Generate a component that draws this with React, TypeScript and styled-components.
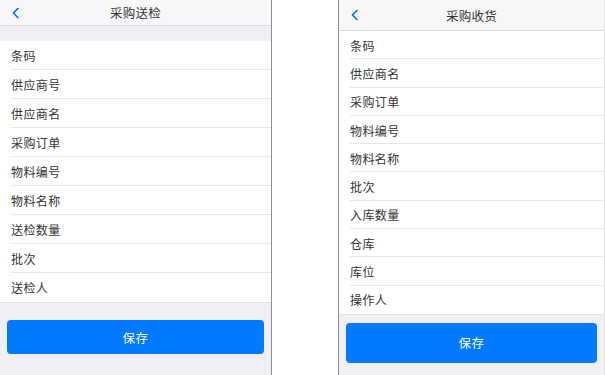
import React from 'react';
import styled, { createGlobalStyle } from 'styled-components';

const GlobalStyle = createGlobalStyle`
  *, *::before, *::after {
    box-sizing: border-box;
  }
  html, body {
    margin: 0;
    padding: 0;
    background: #ffffff;
    font-family: "Noto Sans CJK SC", "Noto Sans", sans-serif;
  }
`;

const Page = styled.div`
  display: flex;
  width: 605px;
  height: 375px;
  overflow: hidden;
`;

const Screen = styled.div<{ $width: number; $side: 'left' | 'right' }>`
  display: flex;
  flex-direction: column;
  width: ${p => p.$width}px;
  height: 375px;
  flex-shrink: 0;
  background: #efeff4;
  border-${p => (p.$side === 'left' ? 'right' : 'left')}: 1px solid #8e8e8e;
  ${p => (p.$side === 'right' ? 'border-right: 1px solid #e2e2e6;' : '')}
`;

const Spacer = styled.div`
  flex: 1;
  background: #ffffff;
`;

const NavBar = styled.div<{ $height: number }>`
  position: relative;
  display: flex;
  align-items: center;
  justify-content: center;
  height: ${p => p.$height}px;
  background: #f7f7f7;
  border-bottom: 1px solid #dcdce0;
  flex-shrink: 0;
`;

const BackButton = styled.div`
  position: absolute;
  left: 12px;
  top: 50%;
  transform: translateY(-50%);
  display: flex;
  align-items: center;
`;

const Title = styled.div`
  font-size: 12.5px;
  color: #333333;
  letter-spacing: 0.3px;
`;

const Band = styled.div`
  height: 15px;
  background: #efeff4;
  flex-shrink: 0;
`;

const List = styled.div`
  background: #ffffff;
  border-bottom: 1px solid #e3e3e6;
`;

const Row = styled.div<{ $height: number; $last: boolean }>`
  position: relative;
  height: ${p => p.$height}px;
  display: flex;
  align-items: center;
  padding-left: 11px;
  font-size: 12px;
  color: #333333;
  letter-spacing: 0.4px;

  &::after {
    content: '';
    display: ${p => (p.$last ? 'none' : 'block')};
    position: absolute;
    left: 11px;
    right: 0;
    bottom: 0;
    height: 1px;
    background: #e6e6e9;
  }
`;

const Footer = styled.div<{ $top: number }>`
  padding: ${p => p.$top}px 7px 0 7px;
`;

const SaveButton = styled.button<{ $height: number }>`
  width: 100%;
  height: ${p => p.$height}px;
  border: none;
  border-radius: 4px;
  background: #007aff;
  color: #ffffff;
  font-family: "Noto Sans CJK SC", "Noto Sans", sans-serif;
  font-size: 12.5px;
  letter-spacing: 0.5px;
  cursor: pointer;
`;

const Chevron = () => (
  <svg width="7" height="11" viewBox="0 0 7 11">
    <path d="M5.8 1 L1.5 5.5 L5.8 10" fill="none" stroke="#007aff" strokeWidth="1.8" strokeLinecap="round" strokeLinejoin="round" />
  </svg>
);

type PhoneProps = {
  side: 'left' | 'right';
  width: number;
  title: string;
  navHeight: number;
  band: boolean;
  rowHeight: number;
  fields: string[];
  buttonTop: number;
  buttonHeight: number;
};

const Phone: React.FC<PhoneProps> = ({ side, width, title, navHeight, band, rowHeight, fields, buttonTop, buttonHeight }) => (
  <Screen $width={width} $side={side}>
    <NavBar $height={navHeight}>
      <BackButton>
        <Chevron />
      </BackButton>
      <Title>{title}</Title>
    </NavBar>
    {band && <Band />}
    <List>
      {fields.map((f, i) => (
        <Row key={f} $height={rowHeight} $last={i === fields.length - 1}>
          {f}
        </Row>
      ))}
    </List>
    <Footer $top={buttonTop}>
      <SaveButton $height={buttonHeight}>保存</SaveButton>
    </Footer>
  </Screen>
);

const App: React.FC = () => {
  const inspectFields = ['条码', '供应商号', '供应商名', '采购订单', '物料编号', '物料名称', '送检数量', '批次', '送检人'];
  const receiveFields = ['条码', '供应商名', '采购订单', '物料编号', '物料名称', '批次', '入库数量', '仓库', '库位', '操作人'];

  return (
    <Page>
      <GlobalStyle />
      <Phone
        side="left"
        width={272}
        title="采购送检"
        navHeight={26}
        band
        rowHeight={29}
        fields={inspectFields}
        buttonTop={17}
        buttonHeight={34}
      />
      <Spacer />
      <Phone
        side="right"
        width={267}
        title="采购收货"
        navHeight={31}
        band={false}
        rowHeight={28.3}
        fields={receiveFields}
        buttonTop={8}
        buttonHeight={40}
      />
    </Page>
  );
};

export default App;
